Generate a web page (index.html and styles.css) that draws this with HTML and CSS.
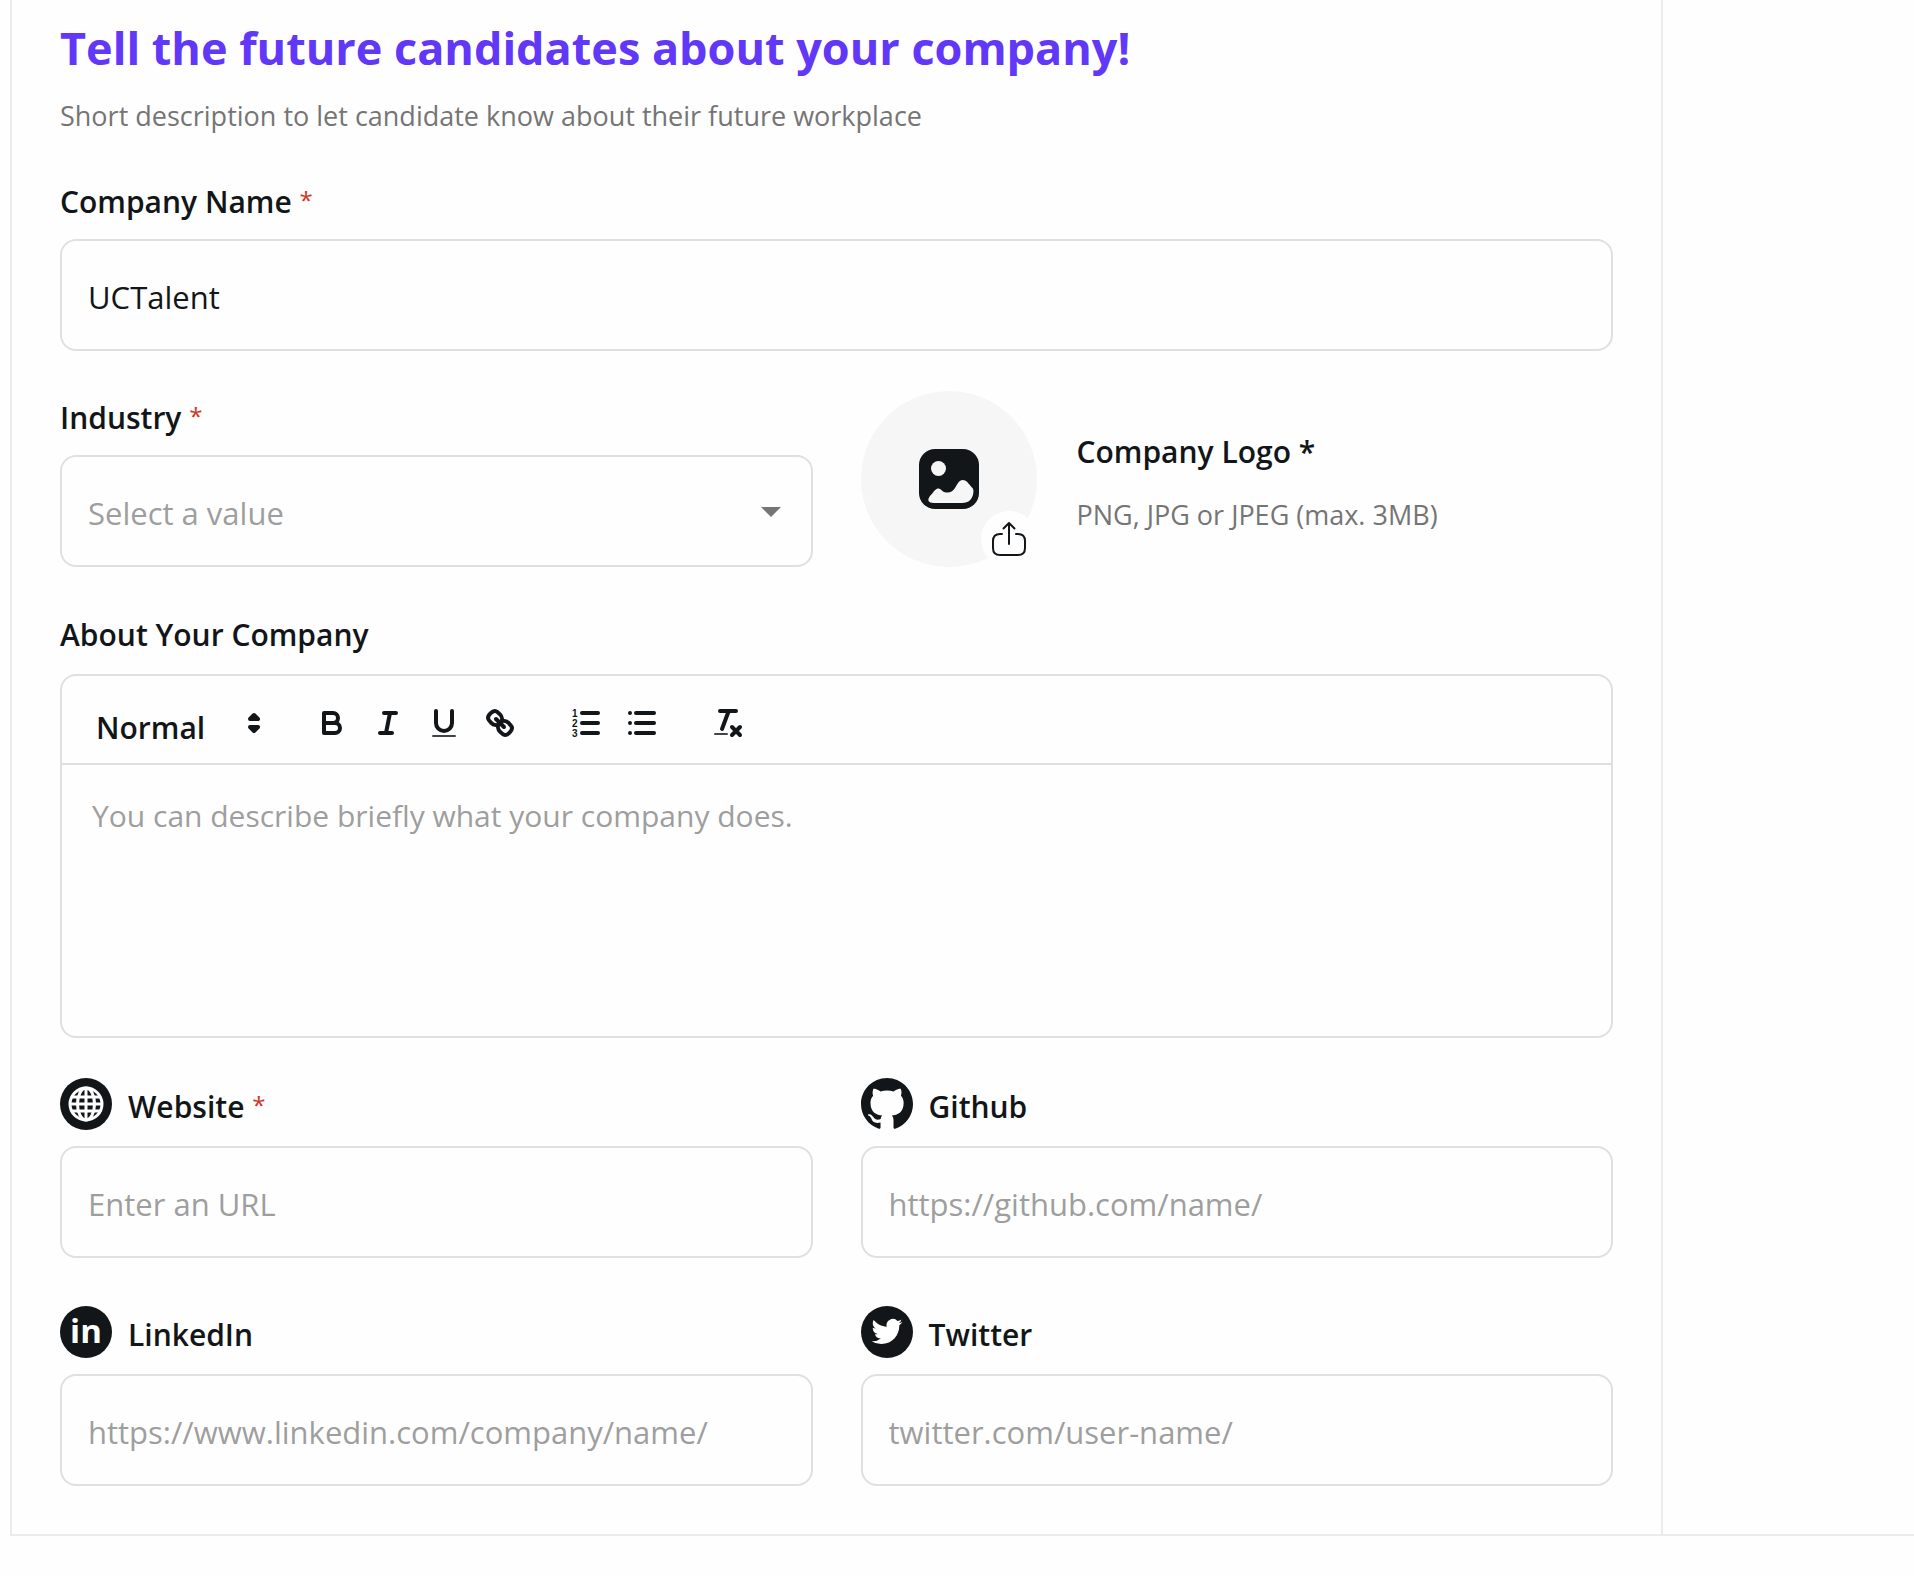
FILE: index.html
```html
<!DOCTYPE html>
<html lang="en">
<head>
  <meta charset="UTF-8" />
  <meta name="viewport" content="width=device-width, initial-scale=1.0"/>
  <title>Company Profile</title>
  <link rel="stylesheet" href="styles.css">
</head>
<body>
  <div class="page">
    <main class="content">
      <h1>Tell the future candidates about your company!</h1>
      <p class="subtitle">Short description to let candidate know about their future workplace</p>

      <form id="companyForm">
        <div class="field">
          <label for="companyName">Company Name <span class="required">*</span></label>
          <input type="text" id="companyName" value="UCTalent" required />
        </div>

        <div class="row">
          <div class="field">
            <label for="industry">Industry <span class="required">*</span></label>
            <div class="select-box">
              <select id="industry" required>
                <option value="">Select a value</option>
                <option>Technology</option>
                <option>Finance</option>
                <option>Education</option>
              </select>
              <svg class="arrow" viewBox="0 0 20 10"><path d="M0 0H20L10 10Z"/></svg>
            </div>
          </div>

          <div class="logo-upload">
            <label class="logo-circle" for="logo" aria-label="Upload logo">
              <svg class="image-icon" viewBox="0 0 60 60">
                <rect width="60" height="60" rx="16" fill="#121619"/>
                <circle cx="19.5" cy="19.5" r="7.5" fill="#f6f6f6"/>
                <path fill="#f6f6f6" d="M11 47C14 44 16 40 19 39.5C21.5 39 23 42.5 26 43.3C31 44.5 34 42 36 39C38.5 35 40 31 43.7 31C48 31 50 35.5 53.5 39C54.5 40 54.6 42 54.3 44C53.5 50 50 54 43 54H15C9 54 8 51 11 47Z"/>
              </svg>
              <span class="upload-badge">
                <svg viewBox="0 0 56 56">
                  <path d="M21 23H19C14.500 23 12 25.500 12 30V37C12 42 14.500 44 19 44H37C41.500 44 44 42 44 37V30C44 25.500 41.500 23 37 23H35"/>
                  <path d="M28 33V12.500M22.500 17.500L28 12L33.500 17.500"/>
                </svg>
              </span>
            </label>
            <input type="file" id="logo" accept=".png,.jpg,.jpeg" />
            <div class="logo-text">
              <label for="logo">Company Logo *</label>
              <p>PNG, JPG or JPEG (max. 3MB)</p>
            </div>
          </div>
        </div>

        <div class="field field-editor">
          <label for="about">About Your Company</label>
          <div class="editor">
            <div class="toolbar">
              <div class="picker">
                <select aria-label="Text style">
                  <option>Normal</option>
                  <option>Heading 1</option>
                  <option>Heading 2</option>
                </select>
                <svg viewBox="0 0 18 18">
                  <polygon points="7 11 9 13 11 11 7 11"/>
                  <polygon points="7 7 9 5 11 7 7 7"/>
                </svg>
              </div>
              <div class="tools">
                <button type="button" aria-label="Bold">
                  <svg viewBox="0 0 18 18">
                    <path d="M5,4H9.500A2.500,2.500,0,0,1,9.500,9H5Z"/>
                    <path d="M5,9h5.500a2.500,2.500,0,0,1,0,5H5Z"/>
                  </svg>
                </button>
                <button type="button" aria-label="Italic">
                  <svg viewBox="0 0 18 18">
                    <path d="M7 4H13M5 14H11M8 14L10 4"/>
                  </svg>
                </button>
                <button type="button" aria-label="Underline">
                  <svg viewBox="0 0 18 18">
                    <path d="M5,3V9a4,4,0,0,0,8,0V3"/>
                    <rect class="solid" x="3" y="15" width="12" height="1" rx="0.500"/>
                  </svg>
                </button>
                <button type="button" aria-label="Link">
                  <svg viewBox="0 0 18 18">
                    <path d="M7 7L11 11"/>
                    <path d="M8.900,4.577a3.476,3.476,0,0,1,.36,4.679A3.476,3.476,0,0,1,4.577,8.900C3.185,7.500,2.035,6.400,4.217,4.217S7.500,3.185,8.900,4.577Z"/>
                    <path d="M13.423,9.100a3.476,3.476,0,0,0-4.679-.36,3.476,3.476,0,0,0,.36,4.679c1.392,1.392,2.500,2.542,4.679.36S14.815,10.500,13.423,9.100Z"/>
                  </svg>
                </button>
              </div>
              <div class="tools">
                <button type="button" aria-label="Ordered list">
                  <svg viewBox="0 0 18 18">
                    <path d="M7 4H15M7 9H15M7 14H15"/>
                    <text x="2" y="6">1</text>
                    <text x="2" y="11">2</text>
                    <text x="2" y="16">3</text>
                  </svg>
                </button>
                <button type="button" aria-label="Bullet list">
                  <svg viewBox="0 0 18 18">
                    <path d="M6 4H15M6 9H15M6 14H15M3 4H3M3 9H3M3 14H3"/>
                  </svg>
                </button>
              </div>
              <div class="tools">
                <button type="button" aria-label="Clear formatting">
                  <svg viewBox="0 0 18 18">
                    <path d="M5 3H13M6 12L9.350 3M11 11L15 15M15 11L11 15"/>
                    <rect class="solid" x="2" y="14" width="7" height="1" rx="0.500"/>
                  </svg>
                </button>
              </div>
            </div>
            <textarea id="about" placeholder="You can describe briefly what your company does."></textarea>
          </div>
        </div>

        <div class="links">
          <div class="field field-link">
            <label for="website">
              <svg class="link-icon" viewBox="0 0 52 52">
                <circle cx="26" cy="26" r="26" fill="#121619"/>
                <g fill="none" stroke="#fff" stroke-width="3">
                  <circle cx="26" cy="26" r="16"/>
                  <ellipse cx="26" cy="26" rx="8.500" ry="16"/>
                  <path d="M26 10V42M10 26H42M12 19H40M12 33H40"/>
                </g>
              </svg>
              <span>Website <span class="required">*</span></span>
            </label>
            <input type="url" id="website" placeholder="Enter an URL" required />
          </div>

          <div class="field field-link">
            <label for="github">
              <svg class="link-icon" viewBox="0 0 16 16">
                <path fill="#121619" d="M8 0C3.580 0 0 3.580 0 8c0 3.540 2.290 6.530 5.470 7.590.4.070.550-.170.550-.380 0-.190-.010-.820-.010-1.490-2.010.370-2.530-.490-2.690-.940-.090-.230-.480-.940-.820-1.130-.280-.150-.680-.520-.010-.530.630-.010 1.080.580 1.230.820.720 1.210 1.870.870 2.330.660.070-.520.280-.870.510-1.070-1.780-.2-3.640-.890-3.640-3.950 0-.870.310-1.590.820-2.150-.080-.2-.360-1.020.080-2.120 0 0 .670-.210 2.200.820.640-.180 1.320-.270 2-.270.680 0 1.360.090 2 .270 1.530-1.040 2.200-.820 2.200-.820.440 1.100.160 1.920.080 2.120.510.560.820 1.270.820 2.150 0 3.070-1.870 3.750-3.650 3.950.290.250.540.730.540 1.480 0 1.070-.010 1.930-.010 2.200 0 .210.150.460.550.380A8.013 8.013 0 0016 8c0-4.420-3.580-8-8-8z"/>
              </svg>
              <span>Github</span>
            </label>
            <input type="text" id="github" placeholder="https://github.com/name/" />
          </div>

          <div class="field field-link">
            <label for="linkedin">
              <svg class="link-icon" viewBox="0 0 52 52" aria-hidden="true">
                <circle cx="26" cy="26" r="26" fill="#121619"/>
                <text class="in-mark" x="26" y="37">in</text>
              </svg>
              <span>LinkedIn</span>
            </label>
            <input type="text" id="linkedin" placeholder="https://www.linkedin.com/company/name/" />
          </div>

          <div class="field field-link">
            <label for="twitter">
              <svg class="link-icon" viewBox="0 0 52 52">
                <circle cx="26" cy="26" r="26" fill="#121619"/>
                <path fill="#fff" transform="translate(10.500 10) scale(1.290)" d="M23.953 4.570a10 10 0 01-2.825.775 4.958 4.958 0 002.163-2.723c-.951.555-2.005.959-3.127 1.184a4.920 4.920 0 00-8.384 4.482C7.690 8.095 4.067 6.130 1.640 3.162a4.822 4.822 0 00-.666 2.475c0 1.710.870 3.213 2.188 4.096a4.904 4.904 0 01-2.228-.616v.060a4.923 4.923 0 003.946 4.827 4.996 4.996 0 01-2.212.085 4.936 4.936 0 004.604 3.417 9.867 9.867 0 01-6.102 2.105c-.390 0-.779-.023-1.170-.067a13.995 13.995 0 007.557 2.209c9.053 0 13.998-7.496 13.998-13.985 0-.210 0-.420-.015-.630A9.935 9.935 0 0024 4.590z"/>
              </svg>
              <span>Twitter</span>
            </label>
            <input type="text" id="twitter" placeholder="twitter.com/user-name/" />
          </div>
        </div>
      </form>
    </main>
    <aside class="side"></aside>
  </div>
</body>
</html>
```

FILE: styles.css
```css
* {
  box-sizing: border-box;
}
body {
  margin: 0;
  font-family: "Open Sans", "Noto Sans", sans-serif;
  font-size: 30px;
  color: #121619;
  background: #fefefe;
}
.page {
  display: grid;
  grid-template-columns: 1fr 251px;
  margin-left: 10px;
  border-left: 2px solid #ebebeb;
  border-bottom: 2px solid #ebebeb;
}
.content {
  padding: 16px 48px 48px;
  border-right: 2px solid #ebebeb;
}
h1 {
  margin: 0 0 16px;
  font-size: 45px;
  line-height: 64px;
  color: #6137f8;
}
p {
  margin: 0;
  font-size: 27px;
  line-height: 40px;
  color: #757575;
}
form {
  display: flex;
  flex-direction: column;
  gap: 40px;
  margin-top: 41px;
}
.field {
  display: flex;
  flex-direction: column;
  gap: 12px;
}
label {
  font-weight: 600;
  line-height: 50px;
}
.required {
  font-size: 24px;
  font-weight: 400;
  line-height: 24px;
  vertical-align: 4px;
  color: #d0321f;
}
input[type="text"], input[type="url"], .select-box select {
  width: 100%;
  height: 112px;
  padding: 4px 26px 0;
  border: 2px solid #e0e0e0;
  border-radius: 16px;
  background: #fefefe;
  font: inherit;
  font-size: 31px;
  color: inherit;
}
::placeholder {
  color: #9e9e9e;
  opacity: 1;
}
select {
  display: block;
  appearance: none;
}
.row, .links {
  display: grid;
  grid-template-columns: 1fr 1fr;
  gap: 48px;
  align-items: end;
}
.select-box {
  position: relative;
}
.select-box select {
  color: #9e9e9e;
}
.arrow {
  position: absolute;
  top: 52px;
  right: 32px;
  width: 20px;
  height: 10px;
  fill: #757575;
  pointer-events: none;
}

/* logo upload */
.logo-upload {
  display: flex;
  align-items: center;
  gap: 40px;
}
.logo-upload input {
  position: absolute;
  width: 1px;
  height: 1px;
  opacity: 0;
}
.logo-circle {
  position: relative;
  display: flex;
  align-items: center;
  justify-content: center;
  width: 176px;
  height: 176px;
  border-radius: 50%;
  background: #f6f6f6;
  cursor: pointer;
}
.image-icon {
  width: 60px;
  height: 60px;
}
.upload-badge {
  position: absolute;
  right: 0;
  bottom: 0;
  width: 56px;
  height: 56px;
  border-radius: 50%;
  background: #fefefe;
}
.upload-badge svg {
  display: block;
  fill: none;
  stroke: #121619;
  stroke-width: 2;
  stroke-linecap: round;
  stroke-linejoin: round;
}
.logo-text {
  display: flex;
  flex-direction: column;
  gap: 18px;
  padding-top: 4px;
}

/* editor */
.field-editor {
  gap: 14px;
  margin-top: 3px;
}
.editor {
  border: 2px solid #e0e0e0;
  border-radius: 16px;
}
.toolbar {
  display: flex;
  gap: 30px;
  padding: 23px 16px 16px;
  border-bottom: 2px solid #e0e0e0;
}
.picker {
  position: relative;
}
.picker select {
  width: 196px;
  height: 48px;
  padding: 8px 18px 0;
  border: none;
  background: none;
  font: inherit;
  font-weight: 600;
  color: inherit;
}
.picker svg {
  position: absolute;
  top: 6px;
  right: 2px;
  pointer-events: none;
}
.tools {
  display: flex;
  gap: 10px;
  padding-right: 10px;
}
.tools button {
  width: 46px;
  height: 48px;
  padding: 6px 0 6px 10px;
  border: none;
  background: none;
  cursor: pointer;
}
.toolbar svg {
  display: block;
  width: 36px;
  height: 36px;
  fill: none;
  stroke: #121619;
  stroke-width: 2;
  stroke-linecap: round;
  stroke-linejoin: round;
}
.toolbar polygon {
  fill: #121619;
}
.toolbar .solid {
  fill: #444;
  stroke: none;
}
.toolbar text {
  font-size: 5px;
  font-weight: 700;
  fill: #121619;
  stroke: none;
}
textarea {
  display: block;
  width: 100%;
  height: 271px;
  padding: 30px;
  border: none;
  border-radius: 0 0 14px 14px;
  background: none;
  font: inherit;
  line-height: 42px;
  color: inherit;
  resize: none;
}

/* social links */
.field-link {
  gap: 16px;
}
.field-link label {
  display: flex;
  gap: 16px;
  height: 52px;
}
.field-link label > span {
  padding-top: 4px;
}
.link-icon {
  width: 52px;
  height: 52px;
}
.in-mark {
  font-size: 33px;
  font-weight: 700;
  text-anchor: middle;
  fill: #fff;
}
```
